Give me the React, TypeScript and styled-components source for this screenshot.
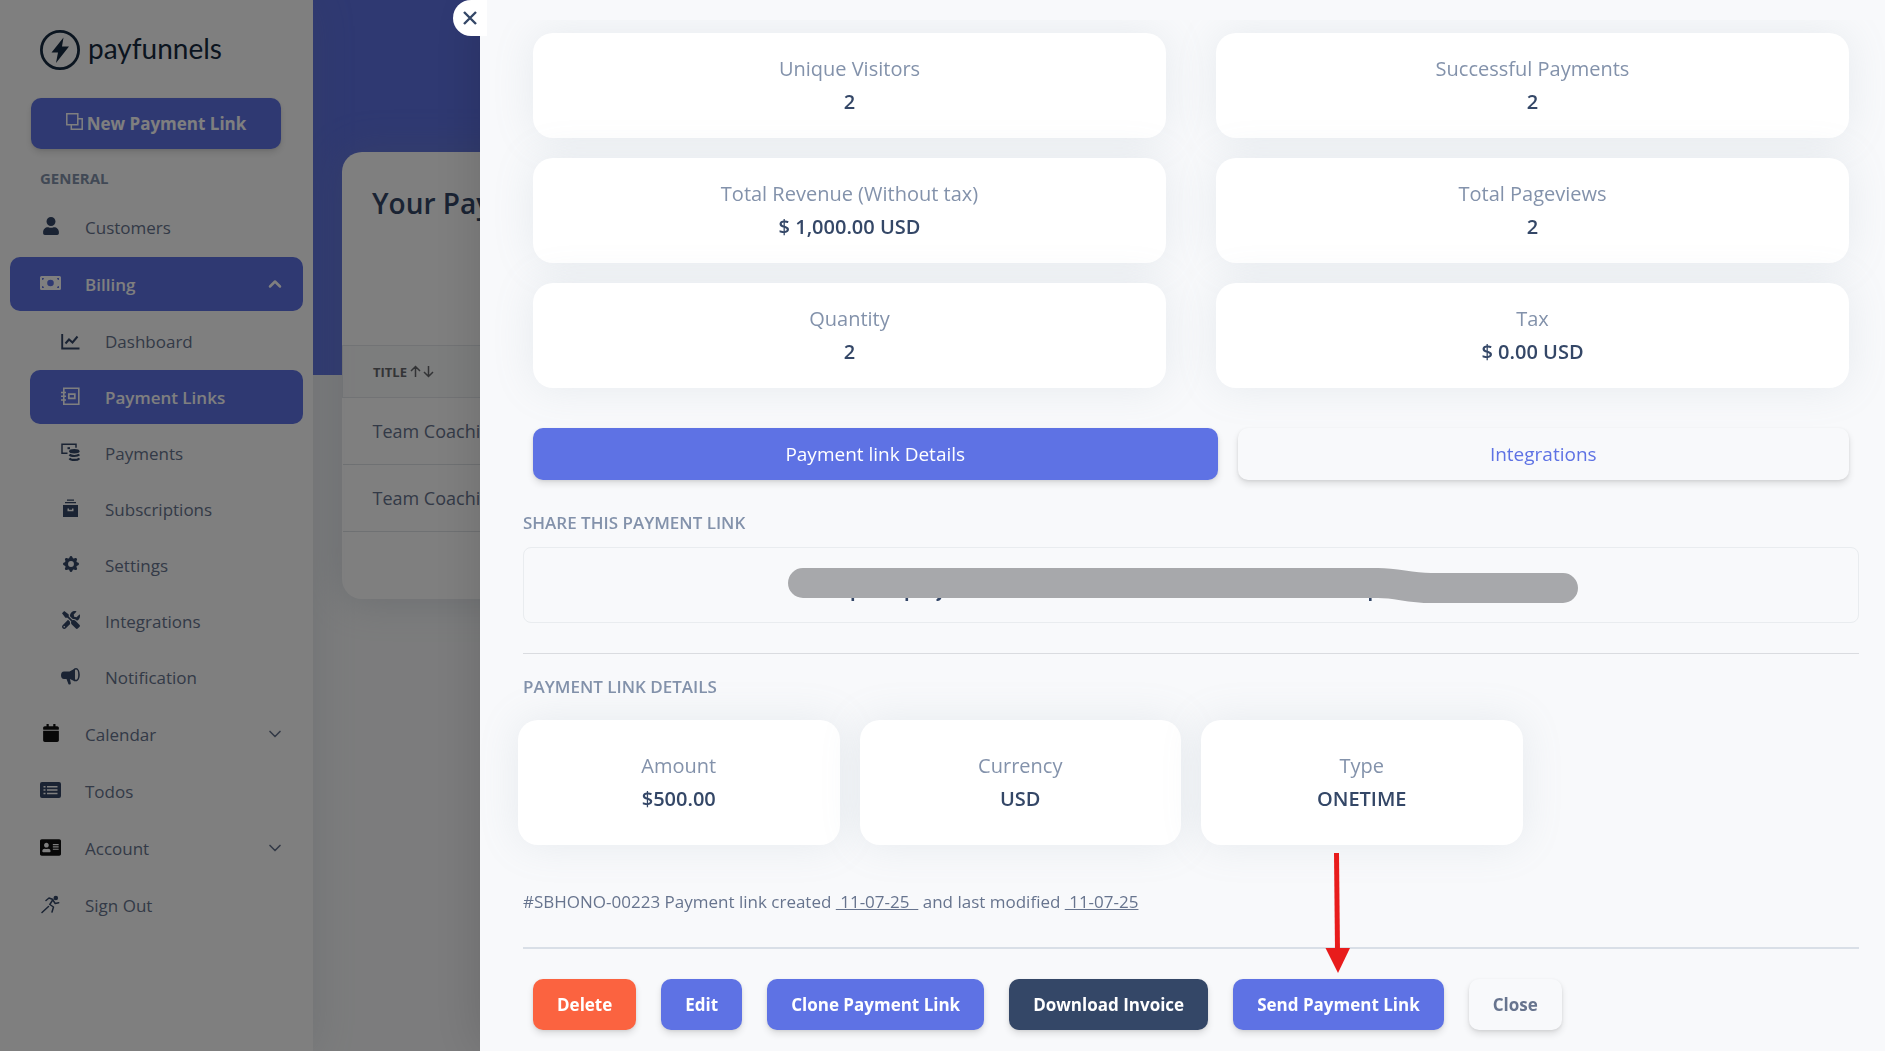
import React from 'react';
import styled, { createGlobalStyle, css } from 'styled-components';
import { FaUser, FaTools, FaCalendar, FaAddressCard } from 'react-icons/fa';
import { BsGearFill } from 'react-icons/bs';
import { FiChevronDown, FiChevronUp } from 'react-icons/fi';

const primary = '#5e72e4';
const dark = '#344767';
const muted = '#8392ab';
const body = '#67748e';
const surface = '#f8f9fb';

const Global = createGlobalStyle`
  *, *::before, *::after { box-sizing: border-box; }
  body {
    margin: 0;
    background: #f8f9fa;
    font-family: "Open Sans", "Noto Sans", sans-serif;
    font-size: 18px;
    color: ${body};
    overflow: hidden;
  }
  h1, h2, p, ul, dl, dd { margin: 0; padding: 0; }
  ul { list-style: none; }
  button { font-family: inherit; border: 0; cursor: pointer; }
`;

/* ---------- page behind the drawer ---------- */

const Page = styled.div`
  display: flex;
  min-height: 100vh;
`;

const Sidebar = styled.aside`
  flex: 0 0 313px;
  background: #fff;
  box-shadow: 0 0 40px rgba(136, 152, 170, 0.2);
  display: flex;
  flex-direction: column;
  z-index: 1;
`;

const Brand = styled.a`
  display: flex;
  align-items: flex-start;
  gap: 8px;
  padding: 30px 40px 28px;
  height: 98px;
  color: #172b40;
  text-decoration: none;
  font-family: Lato, "Open Sans", sans-serif;
  font-size: 28px;
  line-height: 36px;
`;

const raised = css`
  border-radius: 10px;
  box-shadow: 0 4px 7px rgba(0, 0, 0, 0.11), 0 1px 3px rgba(0, 0, 0, 0.08);
`;

const NewLink = styled.button`
  ${raised}
  display: flex;
  align-items: center;
  justify-content: center;
  gap: 4px;
  height: 51px;
  margin: 0 32px 0 31px;
  background: ${primary};
  color: #fff;
  font-size: 17px;
  font-weight: 700;
  svg { margin-bottom: 4px; }
`;

const NavHeading = styled.h2`
  padding: 19px 40px 12px;
  font-size: 15px;
  line-height: 20px;
  font-weight: 700;
  text-transform: uppercase;
  color: ${muted};
`;

const NavList = styled.ul`
  display: flex;
  flex-direction: column;
  gap: 3px;
  padding: 0 10px;
`;

const SubList = styled.ul`
  display: flex;
  flex-direction: column;
  gap: 2px;
  padding: 3px 0 0 20px;
`;

const NavLink = styled.a<{ $active?: boolean }>`
  display: flex;
  align-items: center;
  height: 54px;
  padding: 0 18px 0 30px;
  border-radius: 10px;
  font-size: 17px;
  text-decoration: none;
  color: ${(p) => (p.$active ? '#fff' : body)};
  background: ${(p) => (p.$active ? primary : 'transparent')};
  font-weight: ${(p) => (p.$active ? 600 : 400)};
`;

const NavIcon = styled.span<{ $color: string }>`
  display: flex;
  justify-content: center;
  flex: 0 0 21px;
  margin-right: 24px;
  padding-bottom: 2px;
  color: ${(p) => p.$color};
`;

const Grow = styled.span`
  flex: 1;
`;

const Main = styled.main`
  flex: 1;
  min-width: 0;
  padding: 152px 29px 0;
  background: linear-gradient(${primary} 375px, #f8f9fa 375px);
`;

const ListCard = styled.section`
  background: #fff;
  border-radius: 20px;
  padding-bottom: 67px;
  box-shadow: 0 0 40px rgba(136, 152, 170, 0.3);
`;

const ListTitle = styled.h1`
  height: 193px;
  padding: 30px 30px 0;
  font-size: 28px;
  line-height: 42px;
  font-weight: 600;
  color: ${dark};
`;

const Table = styled.table`
  width: 100%;
  border-collapse: collapse;
  th {
    height: 52px;
    padding: 0 30px;
    border: 1px solid #e4e7eb;
    background: #f9fafb;
    font-size: 13px;
    font-weight: 700;
    text-align: left;
    color: #67686c;
  }
  td {
    height: 67px;
    padding: 0 30px;
    border-bottom: 1px solid #dee2e6;
  }
`;

const SortLabel = styled.span`
  display: flex;
  align-items: center;
  gap: 3px;
`;

const Overlay = styled.div`
  position: fixed;
  inset: 0;
  z-index: 2;
  background: rgba(0, 0, 0, 0.5);
`;

/* ---------- drawer ---------- */

const Drawer = styled.section`
  position: fixed;
  inset: 0 0 0 480px;
  z-index: 3;
  padding: 20px 0 0;
  background: ${surface};
  box-shadow: 0 0 50px rgba(0, 0, 0, 0.15);
`;

const CloseTab = styled.button`
  position: absolute;
  top: 0;
  left: -27px;
  width: 34px;
  height: 36px;
  padding: 0;
  display: flex;
  align-items: center;
  justify-content: center;
  background: #fff;
  color: ${dark};
  border-radius: 18px 0 0 18px;
`;

const Scroll = styled.div`
  height: 100%;
  overflow: hidden;
  padding: 13px 26px 0 43px;
`;

const StatGrid = styled.dl`
  display: grid;
  grid-template-columns: 1fr 1fr;
  gap: 20px 50px;
  padding: 0 10px;
`;

const DetailGrid = styled.dl`
  display: grid;
  grid-template-columns: repeat(4, 1fr);
  gap: 20px;
  margin: 21px -5px 0;
`;

const StatCard = styled.div<{ $height: number }>`
  display: flex;
  flex-direction: column;
  justify-content: center;
  min-height: ${(p) => p.$height}px;
  padding-bottom: 2px;
  background: #fff;
  border-radius: 20px;
  box-shadow: 0 0 40px rgba(136, 152, 170, 0.15);
  text-align: center;
  font-size: 20px;
  line-height: 33px;
  dt { color: ${muted}; }
  dd { color: ${dark}; font-weight: 600; }
`;

const Tabs = styled.div`
  display: flex;
  gap: 20px;
  padding: 40px 10px 0;
`;

const Tab = styled.button<{ $active?: boolean }>`
  ${raised}
  flex: 1 1 auto;
  height: 52px;
  font-size: 19px;
  color: ${(p) => (p.$active ? '#fff' : primary)};
  background: ${(p) => (p.$active ? primary : surface)};
`;

const SectionTitle = styled.h2`
  margin-top: 31px;
  font-size: 17px;
  line-height: 24px;
  font-weight: 600;
  text-transform: uppercase;
  color: ${muted};
`;

const ShareBox = styled.div`
  display: flex;
  justify-content: center;
  margin-top: 12px;
  height: 76px;
  padding-right: 16px;
  border: 1px solid #e9ecef;
  border-radius: 8px;
`;

const Rule = styled.hr<{ $thick?: boolean }>`
  margin: ${(p) => (p.$thick ? 32 : 30)}px 0 -10px;
  border: 0;
  height: ${(p) => (p.$thick ? 2 : 1)}px;
  background: ${(p) => (p.$thick ? '#d9dfe7' : '#dadce0')};
`;

const Meta = styled.p`
  margin-top: 44px;
  line-height: 26px;
  font-size: 17px;
  white-space: pre-wrap;
`;

const Actions = styled.div`
  display: flex;
  gap: 25px;
  padding: 40px 10px 0;
`;

const Action = styled.button<{ $bg?: string; $fg?: string }>`
  ${raised}
  height: 51px;
  padding: 0 24px;
  font-size: 17px;
  font-weight: 700;
  white-space: nowrap;
  background: ${(p) => p.$bg || primary};
  color: ${(p) => p.$fg || '#fff'};
`;

const Pointed = styled.div`
  position: relative;
  svg {
    position: absolute;
    left: calc(50% - 13px);
    bottom: calc(100% + 6px);
  }
`;

/* ---------- drawings ---------- */

const Logo = () => (
  <svg width="40" height="40" viewBox="0 0 40 40" aria-hidden="true">
    <circle cx="20" cy="20" r="18.6" fill="none" stroke="currentColor" strokeWidth="2.8" />
    <path d="M23.5 7.5 11.5 22.5h6.5L16 33 29 16.5h-7z" fill="currentColor" />
  </svg>
);

const CopyIcon = () => (
  <svg width="17" height="17" viewBox="0 0 17 17" fill="none" stroke="currentColor" strokeWidth="1.5" aria-hidden="true">
    <path d="M.8.8h11v11H.8zM12 5.8h4.2v10.4H5.3v-4" />
  </svg>
);

const CashIcon = () => (
  <svg width="21" height="14" viewBox="0 0 21 14" aria-hidden="true">
    <path
      fill="currentColor"
      fillRule="evenodd"
      d="M1.5 0h18A1.5 1.5 0 0 1 21 1.5v11a1.5 1.5 0 0 1-1.5 1.5h-18A1.5 1.5 0 0 1 0 12.5v-11A1.5 1.5 0 0 1 1.5 0zM10.5 3.7a3.3 3.3 0 1 0 0 6.6 3.3 3.3 0 0 0 0-6.6zM2 2v2a2 2 0 0 0 2-2zM19 2h-2a2 2 0 0 0 2 2zM2 12h2a2 2 0 0 0-2-2zM19 12v-2a2 2 0 0 0-2 2z"
    />
  </svg>
);

const Icon18 = ({ children }: { children: React.ReactNode }) => (
  <svg width="19" height="19" viewBox="0 0 19 19" fill="none" stroke="currentColor" aria-hidden="true">
    {children}
  </svg>
);

const ChartIcon = () => (
  <Icon18>
    <path d="M1.2 3v14.5h17.3" strokeWidth="1.9" />
    <path d="m4.5 12.5 3.5-4 3.5 3 5-6" strokeWidth="2" />
  </Icon18>
);

const LedgerIcon = () => (
  <Icon18>
    <path d="M2.8 1.2h15v16h-15z" strokeWidth="1.6" />
    <path d="M0 5.5h5M0 9.2h5M0 13h5" strokeWidth="1.4" />
    <path d="M7.8 7.2h6v4.2h-6z" strokeWidth="1.7" />
  </Icon18>
);

const CoinsIcon = () => (
  <Icon18>
    <path d="M6.5 10.2H1V1.2h14v3.5" strokeWidth="1.5" />
    <path d="M6.5 5.2h2.5" strokeWidth="2" />
    <ellipse cx="13.3" cy="8.2" rx="5.2" ry="2.2" fill="currentColor" stroke="none" />
    <path d="M8.5 11.5c1.5 2 8.2 2 9.8 0M8.5 15.3c1.5 2.2 8.2 2.2 9.8 0" strokeWidth="2.2" />
  </Icon18>
);

const ArchiveIcon = () => (
  <Icon18>
    <path d="M6 1.2h7M4 3.7h11" strokeWidth="1.3" />
    <path d="M2 6h15v12H2zm4.5 3.5v2.7h6V9.5H11v1.2H8V9.5z" fill="currentColor" fillRule="evenodd" stroke="none" />
  </Icon18>
);

const MegaphoneIcon = () => (
  <Icon18>
    <path d="M3 4.5h5.5L14 1.5v13l-5-2.5.8 4.2c.2 1.4-2 1.9-2.5.5L5.5 12H3C1 12 0 10.5 0 8.2S1 4.5 3 4.5z" fill="currentColor" stroke="none" />
    <ellipse cx="15" cy="7.7" rx="3" ry="5.9" strokeWidth="1.6" fill="none" />
  </Icon18>
);

const TodoIcon = () => (
  <svg width="21" height="16" viewBox="0 0 21 16" aria-hidden="true">
    <path
      fill="currentColor"
      fillRule="evenodd"
      d="M2 0h17a2 2 0 0 1 2 2v12a2 2 0 0 1-2 2H2a2 2 0 0 1-2-2V2a2 2 0 0 1 2-2zM3.5 4v1.5h2V4zm3.5 0v1.5h10.5V4zM3.5 7.3v1.5h2V7.3zm3.5 0v1.5h10.5V7.3zM3.5 10.7v1.5h2v-1.5zm3.5 0v1.5h10.5v-1.5z"
    />
  </svg>
);

const RunIcon = () => (
  <Icon18>
    <circle cx="14.8" cy="3" r="2.3" fill="currentColor" stroke="none" />
    <path d="M5 5.5 8 3l4 1.5-3.2 5 3.7 2.5-1.5 5M12.2 5.5l2 3 3.5-.8M7.5 11.5l-6.5 6" strokeWidth="1.5" strokeLinecap="round" strokeLinejoin="round" />
  </Icon18>
);

const SortIcon = () => (
  <svg width="24" height="13" viewBox="0 0 24 13" fill="none" stroke="currentColor" strokeWidth="1.5" aria-hidden="true">
    <path d="M5.5 12V1.5M1 6l4.5-4.5L10 6M18.5 1v10.5M14 7l4.5 4.5L23 7" />
  </svg>
);

const CrossIcon = () => (
  <svg width="14" height="14" viewBox="0 0 14 14" stroke="currentColor" strokeWidth="2.4" aria-hidden="true">
    <path d="m1 1 12 12M13 1 1 13" />
  </svg>
);

/* Marker stroke over the link; only a few descenders show beneath it. */
const Marker = () => (
  <svg width="790" height="74" viewBox="0 0 790 74" aria-label="Hidden link">
    <path d="M63.5 49h2.6v4h-2.6zM117.5 49h2.6v4h-2.6zM149.5 49h4.2c-.7 3-2.2 4.2-5.2 3.9v-1.8c1 0 1-.6 1-2.1zM581 49h2.6v4H581z" fill={dark} />
    <path d="M15 35h575c22 0 28 5 53 5h132" fill="none" stroke="#a7a8ab" strokeWidth="30" strokeLinecap="round" />
  </svg>
);

const Arrow = () => (
  <svg width="26" height="120" viewBox="0 0 26 120" aria-hidden="true">
    <path d="M11.5 0 12.5 98" stroke="#e81c1c" strokeWidth="5" />
    <path d="M.5 95h24.5L13 120z" fill="#e81c1c" />
  </svg>
);

/* ---------- data ---------- */

type Item = { label: string; icon: React.ReactNode; color?: string; active?: boolean; open?: boolean; sub?: Item[] };

const nav: Item[] = [
  { label: 'Customers', icon: <FaUser size={18} /> },
  {
    label: 'Billing',
    icon: <CashIcon />,
    active: true,
    open: true,
    sub: [
      { label: 'Dashboard', icon: <ChartIcon /> },
      { label: 'Payment Links', icon: <LedgerIcon />, active: true },
      { label: 'Payments', icon: <CoinsIcon /> },
      { label: 'Subscriptions', icon: <ArchiveIcon /> },
      { label: 'Settings', icon: <BsGearFill size={16} /> },
      { label: 'Integrations', icon: <FaTools size={18} /> },
      { label: 'Notification', icon: <MegaphoneIcon /> },
    ],
  },
  { label: 'Calendar', icon: <FaCalendar size={18} />, color: '#111', open: false },
  { label: 'Todos', icon: <TodoIcon /> },
  { label: 'Account', icon: <FaAddressCard size={21} />, color: '#111', open: false },
  { label: 'Sign Out', icon: <RunIcon /> },
];

const stats = [
  ['Unique Visitors', '2'],
  ['Successful Payments', '2'],
  ['Total Revenue (Without tax)', '$ 1,000.00 USD'],
  ['Total Pageviews', '2'],
  ['Quantity', '2'],
  ['Tax', '$ 0.00 USD'],
];

const details = [
  ['Amount', '$500.00'],
  ['Currency', 'USD'],
  ['Type', 'ONETIME'],
];

const NavItem = ({ item }: { item: Item }) => (
  <li>
    <NavLink href="#" $active={item.active}>
      <NavIcon $color={item.active ? '#fff' : item.color || dark}>{item.icon}</NavIcon>
      {item.label}
      <Grow />
      {item.open === true && <FiChevronUp size={20} strokeWidth={3} />}
      {item.open === false && <FiChevronDown size={20} strokeWidth={2} />}
    </NavLink>
    {item.sub && (
      <SubList>
        {item.sub.map((s) => (
          <NavItem key={s.label} item={s} />
        ))}
      </SubList>
    )}
  </li>
);

export default function App() {
  return (
    <>
      <Global />
      <Page>
        <Sidebar>
          <Brand href="#">
            <Logo />
            payfunnels
          </Brand>
          <NewLink type="button">
            <CopyIcon />
            New Payment Link
          </NewLink>
          <NavHeading>General</NavHeading>
          <nav>
            <NavList>
              {nav.map((item) => (
                <NavItem key={item.label} item={item} />
              ))}
            </NavList>
          </nav>
        </Sidebar>
        <Main>
          <ListCard>
            <ListTitle>Your Payment Links</ListTitle>
            <Table>
              <thead>
                <tr>
                  <th>
                    <SortLabel>
                      TITLE
                      <SortIcon />
                    </SortLabel>
                  </th>
                </tr>
              </thead>
              <tbody>
                <tr>
                  <td>Team Coaching</td>
                </tr>
                <tr>
                  <td>Team Coaching</td>
                </tr>
              </tbody>
            </Table>
          </ListCard>
        </Main>
      </Page>
      <Overlay />
      <Drawer role="dialog" aria-label="Payment link">
        <CloseTab type="button" aria-label="Close panel">
          <CrossIcon />
        </CloseTab>
        <Scroll>
          <StatGrid>
            {stats.map(([k, v]) => (
              <StatCard key={k} $height={105}>
                <dt>{k}</dt>
                <dd>{v}</dd>
              </StatCard>
            ))}
          </StatGrid>
          <Tabs>
            <Tab type="button" $active>
              Payment link Details
            </Tab>
            <Tab type="button">Integrations</Tab>
          </Tabs>
          <SectionTitle>Share this payment link</SectionTitle>
          <ShareBox>
            <Marker />
          </ShareBox>
          <Rule />
          <SectionTitle>Payment link details</SectionTitle>
          <DetailGrid>
            {details.map(([k, v]) => (
              <StatCard key={k} $height={125}>
                <dt>{k}</dt>
                <dd>{v}</dd>
              </StatCard>
            ))}
          </DetailGrid>
          <Meta>
            #SBHONO-00223 Payment link created <u>{' 11-07-25  '}</u> and last modified <u>{' 11-07-25'}</u>
          </Meta>
          <Rule $thick />
          <Actions>
            <Action type="button" $bg="#fb6340">Delete</Action>
            <Action type="button">Edit</Action>
            <Action type="button">Clone Payment Link</Action>
            <Action type="button" $bg={dark}>Download Invoice</Action>
            <Pointed>
              <Arrow />
              <Action type="button">Send Payment Link</Action>
            </Pointed>
            <Action type="button" $bg={surface} $fg={body}>Close</Action>
          </Actions>
        </Scroll>
      </Drawer>
    </>
  );
}
